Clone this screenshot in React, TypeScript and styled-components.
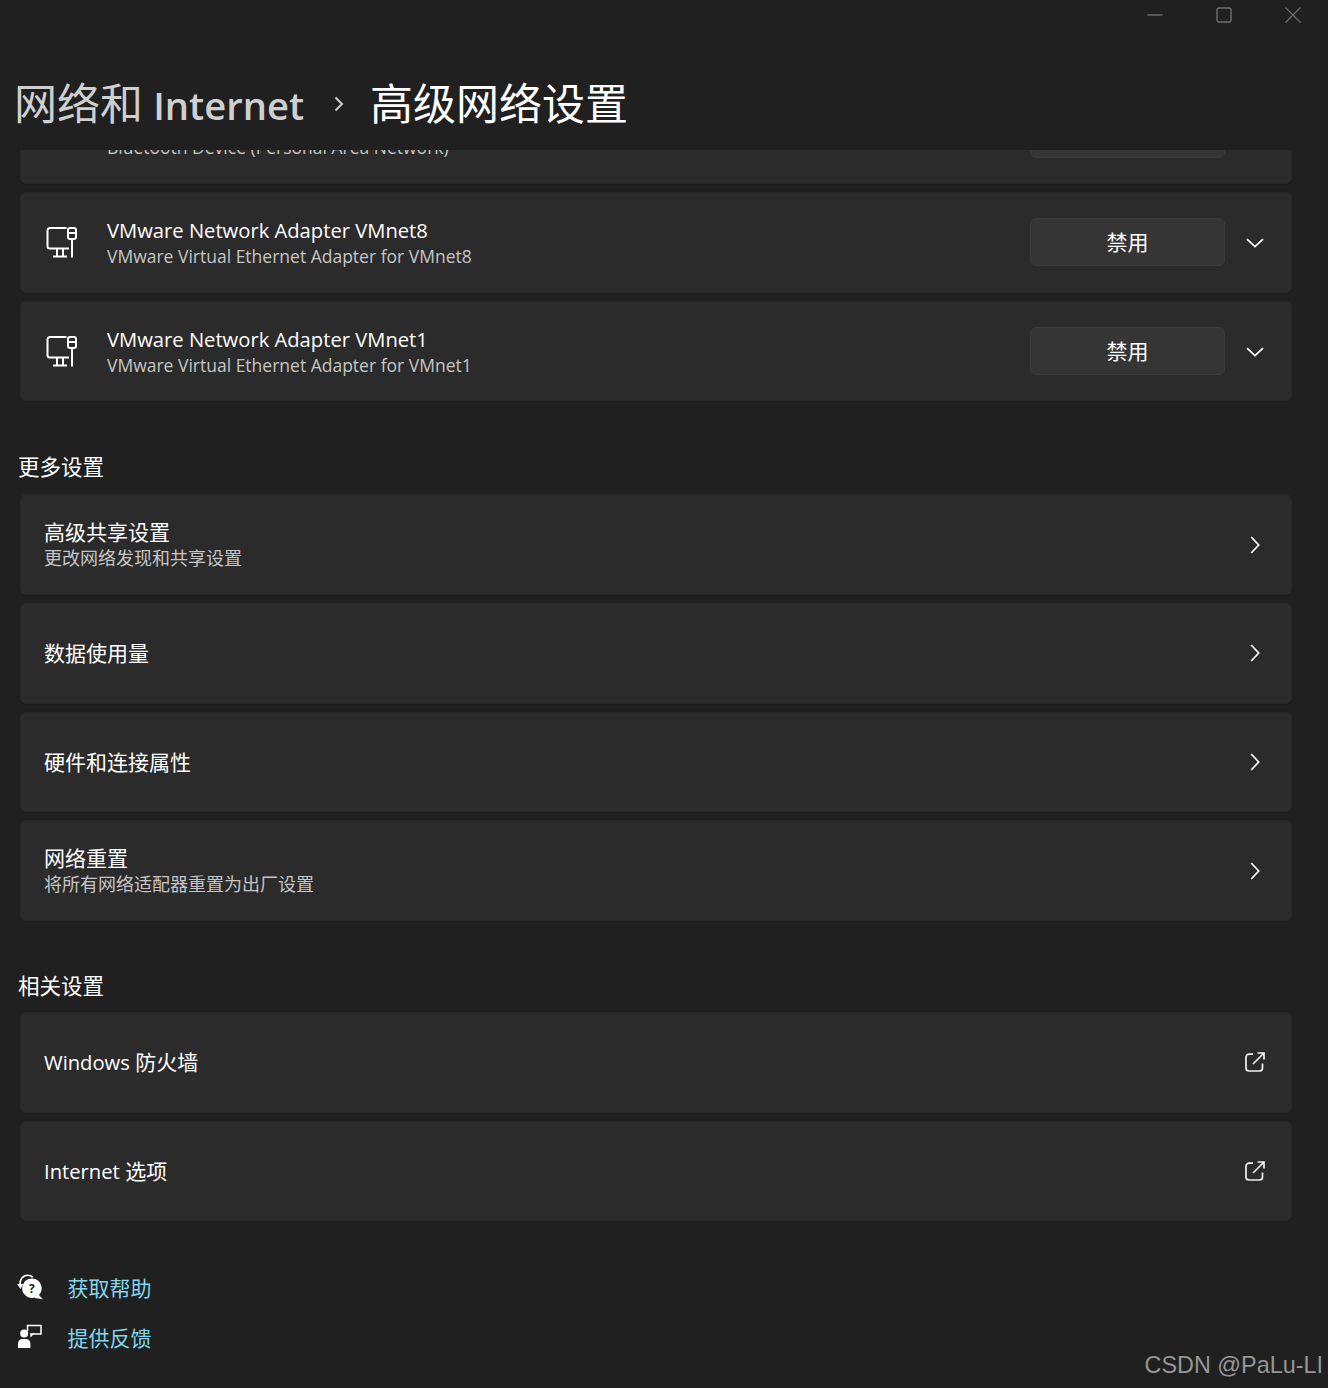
import React from "react";
import styled, { createGlobalStyle } from "styled-components";

const GlobalStyle = createGlobalStyle`
  html, body {
    margin: 0;
    padding: 0;
    background: #202020;
  }
  body {
    font-family: "Open Sans", "Noto Sans CJK SC", sans-serif;
    color: #ffffff;
  }
`;

const cjk = `"Open Sans", "Noto Sans CJK SC", sans-serif`;

const MonitorIcon = () => (
  <svg width="32" height="32" viewBox="0 0 32 32" fill="none" stroke="#fff" strokeWidth="2">
    <path d="M20.5 2H4a2.5 2.5 0 0 0-2.5 2.5V20A2.5 2.5 0 0 0 4 22.5H23" />
    <path d="M11 22.5V30M17 22.5V30M7 30.5H21" />
    <rect x="22" y="2" width="8" height="11" rx="2" />
    <path d="M22 7H30M26 13V31.5" />
  </svg>
);

const ChevronDown = () => (
  <svg width="18" height="10" viewBox="0 0 18 10" fill="none" stroke="#fff" strokeWidth="1.7">
    <path d="M1 1.2L9 8.7L17 1.2" />
  </svg>
);

const ChevronRight = () => (
  <svg width="10" height="18" viewBox="0 0 10 18" fill="none" stroke="#fff" strokeWidth="1.7">
    <path d="M1.2 1L8.7 9L1.2 17" />
  </svg>
);

const ExternalIcon = () => (
  <svg width="20" height="20" viewBox="0 0 20 20" fill="none" stroke="#f0f0f0" strokeWidth="1.7">
    <path d="M8 2.2H4a3 3 0 0 0-3 3V16a3 3 0 0 0 3 3h10.5a3 3 0 0 0 3-3v-4.5" />
    <path d="M8 12L18.5 1.5M12.5 1H19V7.5" />
  </svg>
);

const HelpIcon = () => (
  <svg width="26" height="26" viewBox="0 0 26 26">
    <path d="M3 11C2.5 5.5 6 1.2 10.5 1.2c2.2 0 4 .7 5.3 2" fill="none" stroke="#fff" strokeWidth="1.6" />
    <path d="M0.2 10h6L3.5 15z" fill="#fff" />
    <path d="M15 4.5a9.7 9.7 0 1 1-5.2 17.9A9.7 9.7 0 0 1 15 4.5zM21 20l4.8 5.2-8-1.2z" fill="#fff" />
    <text x="14.8" y="18.6" fontSize="12" fontWeight="700" textAnchor="middle" fill="#202020" fontFamily="Open Sans">?</text>
  </svg>
);

const FeedbackIcon = () => (
  <svg width="26" height="26" viewBox="0 0 26 26">
    <circle cx="7.2" cy="9.5" r="4" fill="#fff" />
    <path d="M1 24V19.5a4.5 4.5 0 0 1 4.5-4.5h3.4a4.5 4.5 0 0 1 4.5 4.5V24z" fill="#fff" />
    <path d="M10.5 7V1.5H24V10H15" fill="none" stroke="#fff" strokeWidth="1.5" />
    <path d="M13 9.2h4.6l-4 4.4z" fill="#fff" />
  </svg>
);

type RowProps = {
  title: React.ReactNode;
  desc?: string;
  withAdapter?: boolean;
  trailing: "expand" | "next" | "external";
};

const SettingRow = ({ title, desc, withAdapter, trailing }: RowProps) => (
  <Card>
    {withAdapter && (
      <AdapterIcon>
        <MonitorIcon />
      </AdapterIcon>
    )}
    <Labels>
      <RowTitle>{title}</RowTitle>
      {desc && <RowDesc $latin={withAdapter}>{desc}</RowDesc>}
    </Labels>
    {withAdapter && <DisableButton>禁用</DisableButton>}
    <Trailing $expand={trailing === "expand"}>
      {trailing === "expand" && <ChevronDown />}
      {trailing === "next" && <ChevronRight />}
      {trailing === "external" && <ExternalIcon />}
    </Trailing>
  </Card>
);

export default function App() {
  return (
    <>
      <GlobalStyle />
      <Page>
        <TitleBar>
          <WinButton>
            <svg width="16" height="16" viewBox="0 0 16 16" stroke="#6e6e6e" strokeWidth="1.4" fill="none">
              <path d="M0.5 8H15.5" />
            </svg>
          </WinButton>
          <WinButton>
            <svg width="16" height="16" viewBox="0 0 16 16" stroke="#6e6e6e" strokeWidth="1.4" fill="none">
              <rect x="1" y="1" width="14" height="14" rx="2" />
            </svg>
          </WinButton>
          <WinButton>
            <svg width="16" height="16" viewBox="0 0 16 16" stroke="#6e6e6e" strokeWidth="1.2" fill="none">
              <path d="M0.5 0.5L15.5 15.5M15.5 0.5L0.5 15.5" />
            </svg>
          </WinButton>
        </TitleBar>
        <Breadcrumb>
          <ParentCrumb>
            网络和 <CrumbLatin>Internet</CrumbLatin>
          </ParentCrumb>
          <CrumbSep>
            <svg width="10" height="16" viewBox="0 0 10 16" fill="none" stroke="#cfcfcf" strokeWidth="2">
              <path d="M1.5 1.5L8 8L1.5 14.5" />
            </svg>
          </CrumbSep>
          <CurrentCrumb>高级网络设置</CurrentCrumb>
        </Breadcrumb>
        <Scroller>
          <ScrollContent>
            <CardList>
              <SettingRow title={<Latin>Bluetooth Network Connection</Latin>} desc="Bluetooth Device (Personal Area Network)" withAdapter trailing="expand" />
              <SettingRow title={<Latin>VMware Network Adapter VMnet8</Latin>} desc="VMware Virtual Ethernet Adapter for VMnet8" withAdapter trailing="expand" />
              <SettingRow title={<Latin>VMware Network Adapter VMnet1</Latin>} desc="VMware Virtual Ethernet Adapter for VMnet1" withAdapter trailing="expand" />
            </CardList>
            <SectionTitle>更多设置</SectionTitle>
            <CardList>
              <SettingRow title="高级共享设置" desc="更改网络发现和共享设置" trailing="next" />
              <SettingRow title="数据使用量" trailing="next" />
              <SettingRow title="硬件和连接属性" trailing="next" />
              <SettingRow title="网络重置" desc="将所有网络适配器重置为出厂设置" trailing="next" />
            </CardList>
            <SectionTitle $tight>相关设置</SectionTitle>
            <CardList>
              <SettingRow title={<><Latin>Windows</Latin> 防火墙</>} trailing="external" />
              <SettingRow title={<><Latin>Internet</Latin> 选项</>} trailing="external" />
            </CardList>
            <HelpLinks>
              <HelpLink>
                <HelpIcon />
                <HelpText>获取帮助</HelpText>
              </HelpLink>
              <HelpLink>
                <FeedbackIcon />
                <HelpText>提供反馈</HelpText>
              </HelpLink>
            </HelpLinks>
          </ScrollContent>
        </Scroller>
        <Watermark>CSDN @PaLu-LI</Watermark>
      </Page>
    </>
  );
}

const Page = styled.div`
  position: relative;
  width: 1328px;
  height: 1388px;
  overflow: hidden;
  display: flex;
  flex-direction: column;
  background: #202020;
`;

const TitleBar = styled.div`
  height: 31px;
  display: flex;
  justify-content: flex-end;
  padding-right: 0.5px;
`;

const WinButton = styled.div`
  width: 69px;
  height: 30px;
  display: flex;
  align-items: center;
  justify-content: center;
`;

const Breadcrumb = styled.div`
  height: 119px;
  box-sizing: border-box;
  padding: 41px 0 0 14px;
  display: flex;
  align-items: flex-start;
  font-family: ${cjk};
  font-size: 43px;
  line-height: 64px;
`;

const ParentCrumb = styled.div`
  color: #cfcfcf;
  word-spacing: -1px;
`;

const CrumbLatin = styled.span`
  font-size: 38.2px;
  font-weight: 600;
`;

const CrumbSep = styled.div`
  width: 66px;
  height: 64px;
  box-sizing: border-box;
  padding-left: 3px;
  display: flex;
  align-items: center;
  justify-content: center;
`;

const CurrentCrumb = styled.div`
  color: #ffffff;
`;

const Scroller = styled.div`
  flex: 1;
  overflow: hidden;
`;

const ScrollContent = styled.div`
  margin-top: -66.7px;
  padding: 0 36px 0 20px;
`;

const CardList = styled.div`
  display: flex;
  flex-direction: column;
  gap: 8px;
`;

const Card = styled.div`
  height: 100.7px;
  box-sizing: border-box;
  display: flex;
  align-items: center;
  padding-left: 23px;
  padding-right: 16px;
  background: #2b2b2b;
  border: 1px solid #282828;
  box-shadow: 0 1px 0 #1c1c1c;
  border-radius: 6px;
`;

const AdapterIcon = styled.div`
  width: 63px;
  height: 32px;
  flex: none;
  padding-left: 2px;
  box-sizing: border-box;
`;

const Labels = styled.div`
  flex: 1;
  min-width: 0;
  display: flex;
  flex-direction: column;
`;

const RowTitle = styled.div`
  font-size: 21px;
  line-height: 27px;
  color: #ffffff;
`;

const Latin = styled.span`
  font-size: 20.2px;
`;

const RowDesc = styled.div<{ $latin?: boolean }>`
  font-size: ${(p) => (p.$latin ? "17.5px" : "18px")};
  line-height: 24px;
  color: #c5c5c5;
`;

const DisableButton = styled.div`
  width: 195px;
  height: 48px;
  flex: none;
  box-sizing: border-box;
  padding-bottom: 2px;
  display: flex;
  align-items: center;
  justify-content: center;
  background: #353535;
  border: 1px solid #3a3a3a;
  border-radius: 6px;
  font-size: 21px;
  color: #ffffff;
`;

const Trailing = styled.div<{ $expand?: boolean }>`
  width: 40px;
  margin-left: 10px;
  padding-top: ${(p) => (p.$expand ? "2px" : "0")};
  flex: none;
  display: flex;
  align-items: center;
  justify-content: center;
`;

const SectionTitle = styled.div<{ $tight?: boolean }>`
  margin: ${(p) => (p.$tight ? "49.5px 0 11.5px -2px" : "50.6px 0 12.4px -2px")};
  font-size: 21.5px;
  line-height: 30px;
  color: #ffffff;
`;

const HelpLinks = styled.div`
  margin: 47.4px 0 0 -3px;
  display: flex;
  flex-direction: column;
  gap: 14px;
`;

const HelpLink = styled.div`
  height: 36px;
  display: flex;
  align-items: center;
  gap: 24.5px;
`;

const HelpText = styled.span`
  font-size: 21px;
  color: #82d6ee;
`;

const Watermark = styled.div`
  position: absolute;
  right: 5px;
  top: 1348px;
  font-family: "Liberation Sans", sans-serif;
  font-size: 23.4px;
  line-height: 34px;
  color: #969696;
`;
